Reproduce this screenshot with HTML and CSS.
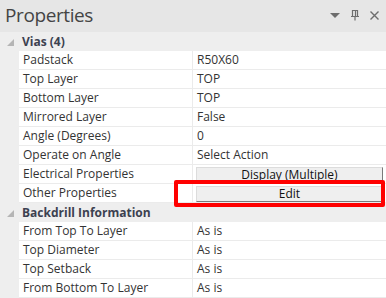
FILE: index.html
```html
<!DOCTYPE html>
<html lang="en">
<head>
    <meta charset="UTF-8">
    <meta name="viewport" content="width=device-width, initial-scale=1.0">
    <title>Properties</title>
    <link rel="stylesheet" href="styles.css">
</head>
<body>
    <div class="panel">
        <div class="title-bar">
            <span class="title">Properties</span>
            <div class="title-icons">
                <svg width="12" height="8" viewBox="0 0 12 8"><path d="M1 2 L11 2 L6 7 Z" fill="#6d6d6d"/></svg>
                <svg width="10" height="12" viewBox="0 0 10 12"><path d="M2.5 1.5 H7.5 V7.5 H2.5 Z M1 7.5 H9 M5 7.5 V11.5 M5.5 1.5 V7.5" fill="none" stroke="#6d6d6d" stroke-width="1.2"/></svg>
                <svg width="11" height="11" viewBox="0 0 11 11"><path d="M1.5 1.5 L9.5 9.5 M9.5 1.5 L1.5 9.5" stroke="#6d6d6d" stroke-width="1.4"/></svg>
            </div>
        </div>

        <div class="grid">
            <div class="group">
                <span class="toggle"></span>
                <span class="group-name">Vias (4)</span>
            </div>
            <div class="row"><span class="gutter"></span><span class="name">Padstack</span><span class="value">R50X60</span></div>
            <div class="row"><span class="gutter"></span><span class="name">Top Layer</span><span class="value">TOP</span></div>
            <div class="row"><span class="gutter"></span><span class="name">Bottom Layer</span><span class="value">TOP</span></div>
            <div class="row"><span class="gutter"></span><span class="name">Mirrored Layer</span><span class="value">False</span></div>
            <div class="row"><span class="gutter"></span><span class="name">Angle (Degrees)</span><span class="value">0</span></div>
            <div class="row"><span class="gutter"></span><span class="name">Operate on Angle</span><span class="value">Select Action</span></div>
            <div class="row"><span class="gutter"></span><span class="name">Electrical Properties</span><span class="value btn-cell"><button class="cell-btn">Display (Multiple)</button></span></div>
            <div class="row"><span class="gutter"></span><span class="name">Other Properties</span><span class="value btn-cell"><button class="cell-btn">Edit</button><span class="highlight"></span></span></div>

            <div class="group">
                <span class="toggle"></span>
                <span class="group-name">Backdrill Information</span>
            </div>
            <div class="row"><span class="gutter"></span><span class="name">From Top To Layer</span><span class="value">As is</span></div>
            <div class="row"><span class="gutter"></span><span class="name">Top Diameter</span><span class="value">As is</span></div>
            <div class="row"><span class="gutter"></span><span class="name">Top Setback</span><span class="value">As is</span></div>
            <div class="row"><span class="gutter"></span><span class="name">From Bottom To Layer</span><span class="value">As is</span></div>
        </div>
    </div>
</body>
</html>
```

FILE: styles.css
```css
body {
    margin: 0;
    padding: 0;
    font-family: "Open Sans", "Noto Sans", sans-serif;
    font-size: 12px;
    color: #333;
    background-color: #eeeeee;
}
.panel {
    width: 386px;
    height: 298px;
    overflow: hidden;
}
.title-bar {
    height: 32px;
    background-color: #e6e6e6;
    display: flex;
    align-items: center;
    justify-content: space-between;
    padding: 0 6px 0 5px;
}
.title {
    font-size: 19px;
    letter-spacing: -0.4px;
    color: #444;
    line-height: 30px;
    margin-top: -2px;
}
.title-icons {
    display: flex;
    align-items: center;
    gap: 9px;
    margin-top: -2px;
}
.title-icons svg {
    display: block;
}
.grid {
    background-color: #eeeeee;
}
.group {
    height: 19px;
    display: flex;
    align-items: center;
    font-weight: bold;
    color: #3c4150;
}
.toggle {
    width: 0;
    height: 0;
    margin: 2px 8px 0 7px;
    border-left: 7px solid transparent;
    border-bottom: 7px solid #b5b5b5;
}
.group-name {
    line-height: 18px;
}
.row {
    display: grid;
    grid-template-columns: 19px 174px 1fr;
    height: 19px;
}
.gutter {
    background-color: #eeeeee;
}
.name, .value {
    background-color: #fff;
    border-bottom: 1px solid #ebebeb;
    line-height: 18px;
    padding-left: 4px;
    white-space: nowrap;
}
.name {
    border-right: 1px solid #ebebeb;
}
.btn-cell {
    position: relative;
    padding: 0 3px 0 3px;
    display: flex;
    align-items: center;
}
.cell-btn {
    width: 100%;
    height: 16px;
    margin-top: 1px;
    padding: 0;
    font-family: inherit;
    font-size: 12px;
    color: #111;
    line-height: 13px;
    background-color: #efefef;
    border: 1px solid #dcdcdc;
    border-right-color: #7a7a7a;
    border-bottom-color: #7a7a7a;
    border-radius: 0;
}
.highlight {
    position: absolute;
    left: -19px;
    top: -4px;
    width: 203px;
    height: 19px;
    border: 4px solid #ff0000;
    border-radius: 2px;
}
```
